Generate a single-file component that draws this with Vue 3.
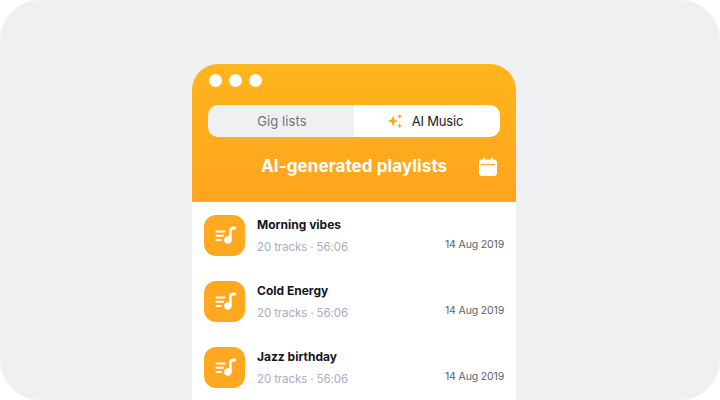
<script setup>
const rows = [
  { name: 'Morning vibes' },
  { name: 'Cold Energy' },
  { name: 'Jazz birthday' },
]
</script>

<template>
  <div class="stage">
    <div class="phone">
      <header class="head">
        <div class="dots"><i></i><i></i><i></i></div>
        <div class="tabs">
          <div class="tab off">Gig lists</div>
          <div class="tab on">
            <svg width="16" height="16" viewBox="0 0 16 16" fill="#ffa726">
              <path d="M6 2.800 7.600 6.400 11.200 8 7.600 9.600 6 13.200 4.400 9.600 .8 8 4.400 6.400Z"/>
              <path d="M12.600 .8 13.400 2.600 15.200 3.400 13.400 4.200 12.600 6 11.800 4.200 10 3.400 11.800 2.600Z"/>
              <path d="M12.600 10.200 13.400 12 15.200 12.800 13.400 13.600 12.600 15.400 11.800 13.600 10 12.800 11.800 12Z"/>
            </svg>
            <span>AI Music</span>
          </div>
        </div>
        <div class="titlebar">
          <h1>AI-generated playlists</h1>
          <svg class="cal" width="20" height="20" viewBox="0 0 20 20" fill="#fff">
            <path fill-rule="evenodd" d="M4 2.600H5V.8h1.700v1.800h6.600V.8H15v1.800h1c1.700 0 3 1.200 3 2.900V16c0 1.700-1.300 3-3 3H4c-1.700 0-3-1.300-3-3V5.500C1 3.800 2.300 2.600 4 2.600ZM3 7v1.200h14V7Z"/>
          </svg>
        </div>
      </header>
      <ul class="list">
        <li v-for="r in rows" :key="r.name" class="row">
          <div class="thumb">
            <svg width="22" height="22" viewBox="0 0 22 22" fill="none" stroke="#fff" stroke-width="2" stroke-linecap="round">
              <path d="M2.500 6.500h8M2.500 10.800h6.500M2.500 15h4.500"/>
              <circle cx="13.800" cy="15" r="3.700" fill="#fff" stroke="none"/>
              <path d="M16.300 15V5.800c0-1.900 1.500-2.800 4.500-2.800" stroke-width="2.800"/>
            </svg>
          </div>
          <div class="info">
            <div class="name">{{ r.name }}</div>
            <div class="meta">20 tracks · 56:06</div>
          </div>
          <div class="date">14 Aug 2019</div>
        </li>
      </ul>
    </div>
  </div>
</template>

<style>
html, body { margin: 0; background: #fff; }
</style>

<style scoped>
.stage {
  width: 720px;
  height: 400px;
  box-sizing: border-box;
  background: #eff0f2;
  border-radius: 40px;
  overflow: hidden;
  padding: 64px 0 0 192px;
  display: flex;
  font-family: "Inter", "Liberation Sans", sans-serif;
}
.phone {
  width: 324px;
  height: 336px;
  background: #fff;
  border-radius: 26px 26px 0 0;
  overflow: hidden;
}
.head {
  height: 138px;
  box-sizing: border-box;
  padding: 10px 16px 0;
  background: linear-gradient(180deg, #ffb51c 0%, #ffa41e 100%);
}
.dots { display: flex; gap: 7px; padding-left: 1px; height: 31px; }
.dots i { width: 13px; height: 13px; border-radius: 50%; background: #fff; }
.tabs {
  display: flex;
  height: 32px;
  border-radius: 10px;
  overflow: hidden;
}
.tab {
  flex: 0 0 50%;
  box-sizing: border-box;
  display: flex;
  align-items: center;
  justify-content: center;
  gap: 9px;
  font-size: 13px;
  letter-spacing: 0.1px;
}
.off { background: #eff0f2; color: #71747d; padding-left: 2px; }
.on { background: #fff; color: #1b1c20; letter-spacing: -0.2px; padding-right: 4px; }
.titlebar { position: relative; height: 58px; display: flex; align-items: center; }
h1 { margin: 0 0 0 53px; font-size: 17px; font-weight: 700; color: #fff; letter-spacing: 0.1px; white-space: nowrap; }
.cal { position: absolute; right: 2px; top: 20px; }
.list { list-style: none; margin: 0; padding: 13px 12px 0; }
.row { display: flex; height: 41px; margin-bottom: 25px; }
.thumb {
  width: 41px;
  height: 41px;
  border-radius: 12px;
  background: #ffa820;
  display: flex;
  align-items: center;
  justify-content: center;
}
.info { margin-left: 12px; flex: 1; }
.name { font-size: 12px; font-weight: 700; color: #15161a; line-height: 14px; margin-top: 3px; }
.meta { font-size: 11.500px; color: #a8adc0; line-height: 14px; margin-top: 8px; letter-spacing: -0.1px; }
.date { align-self: flex-end; font-size: 10.500px; color: #5c5f68; line-height: 14px; margin-bottom: 4px; letter-spacing: -0.15px; }
</style>
